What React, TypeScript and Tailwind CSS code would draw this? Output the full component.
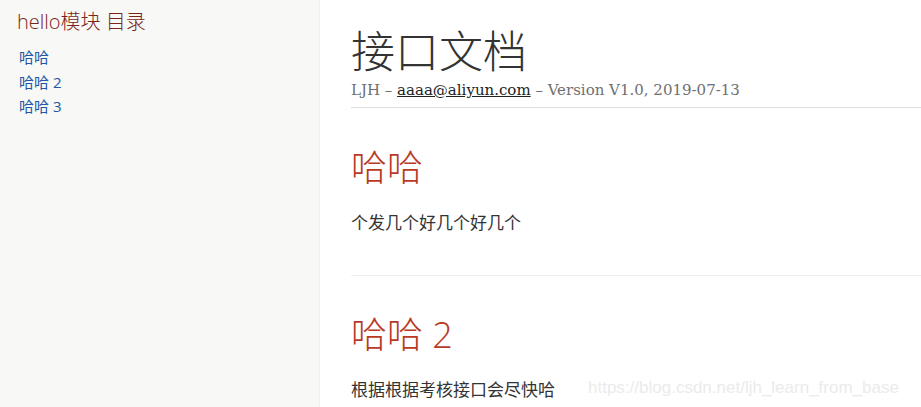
import React from "react";

const sans = { fontFamily: '"Open Sans", "Noto Sans CJK SC", sans-serif' };

export default function App() {
  return (
    <div className="relative flex h-[407px] w-[921px] overflow-hidden bg-white" style={sans}>
      <aside className="w-[320px] shrink-0 border-r border-[#efefed] bg-[#f8f8f7] pl-[17px] pt-[6px]">
        <div className="text-[20px] leading-[32px] font-light text-[#7a2518]">hello模块 目录</div>
        <ul className="mt-[7px] pl-[2px] text-[15px] leading-[24.5px] text-[#2156a5]">
          <li>哈哈</li>
          <li>哈哈 2</li>
          <li>哈哈 3</li>
        </ul>
      </aside>
      <main className="flex-1 pl-[31px]">
        <div className="border-b border-[#dddddf] pb-[7px] pt-[25px]">
          <h1 className="text-[44px] leading-[52px] font-light text-[#333333]">接口文档</h1>
          <div
            className="mt-[3px] text-[15px] leading-[20px] text-[#6f6f6f]"
            style={{ fontFamily: '"DejaVu Serif", serif' }}
          >
            LJH – <span className="text-[#222] underline">aaaa@aliyun.com</span> – Version V1.0, 2019-07-13
          </div>
        </div>
        <section className="border-b border-[#efefed] pb-[39px]">
          <h2 className="mt-[38px] text-[36px] leading-[44px] font-light text-[#ba3925]">哈哈</h2>
          <p className="mt-[19px] text-[17px] leading-[27px] text-[#333333]">个发几个好几个好几个</p>
        </section>
        <section>
          <h2 className="mt-[37px] text-[36px] leading-[44px] font-light text-[#ba3925]">哈哈 2</h2>
          <p className="mt-[19px] text-[17px] leading-[27px] text-[#333333]">根据根据考核接口会尽快哈</p>
        </section>
      </main>
      <div
        className="absolute left-[588px] top-[377px] text-[17px] leading-[22px] text-[#ebebeb]"
        style={{ fontFamily: '"Liberation Sans", Arial, sans-serif' }}
      >
        https://blog.csdn.net/ljh_learn_from_base
      </div>
    </div>
  );
}
